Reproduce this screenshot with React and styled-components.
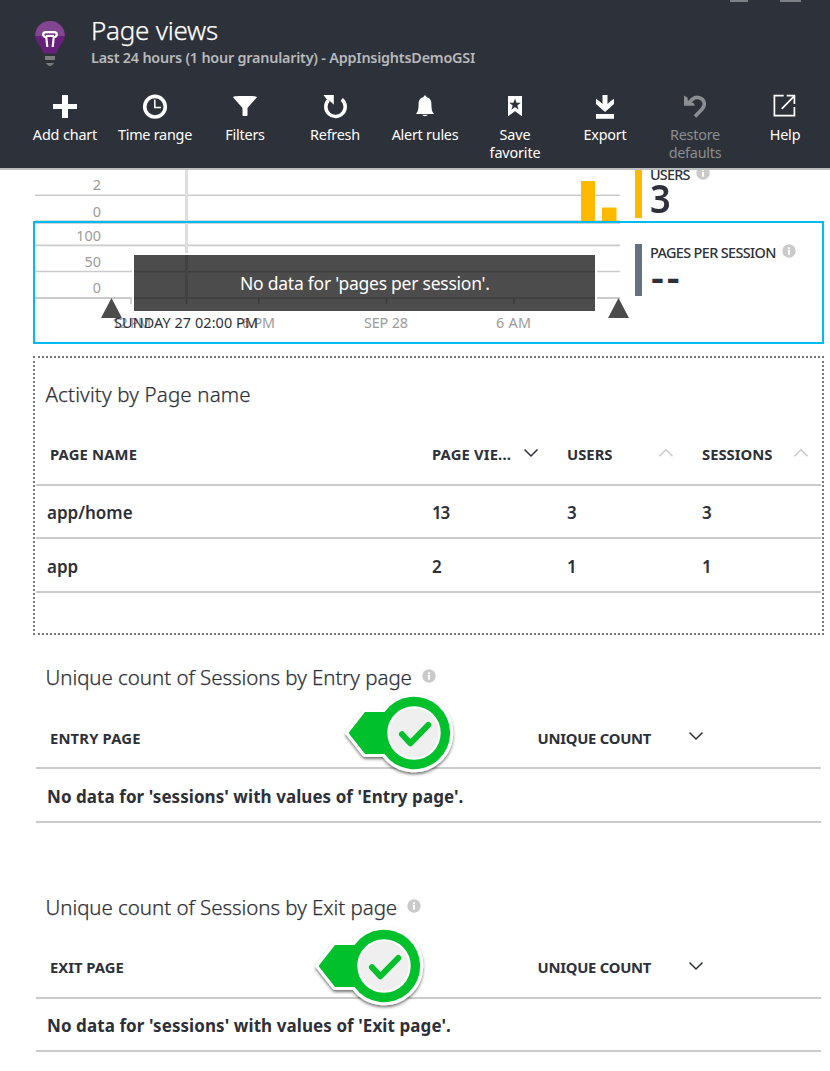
import React from "react";
import styled, { createGlobalStyle } from "styled-components";

const Global = createGlobalStyle`
  * { box-sizing: border-box; }
  body {
    margin: 0;
    background: #fff;
    color: #2d3038;
    font-family: "Noto Sans", "Open Sans", sans-serif;
    overflow: hidden;
  }
  svg { display: block; flex: none; }
`;

const Blade = styled.main`
  width: 830px;
  height: 1071px;
  display: flex;
  flex-direction: column;
  overflow: hidden;
`;

const Header = styled.header`
  position: relative;
  height: 170px;
  flex: none;
  background: #2d3139;
  border-bottom: 2px solid #bbbdbe;
`;

const WindowControls = styled.div`
  position: absolute;
  top: 0;
  left: 730px;
  display: flex;
  gap: 32px;
`;

const ControlEdge = styled.span`
  width: ${(p) => p.$width}px;
  height: 2px;
  background: #7c7f84;
`;

const TitleBar = styled.div`
  display: flex;
  height: 90px;
  padding: 20px 0 0 34px;
`;

const Titles = styled.div`
  display: flex;
  flex-direction: column;
  padding-left: 25px;
`;

const Label = styled.span`
  white-space: nowrap;
  letter-spacing: ${(p) => p.$track || 0}px;
`;

const Title = styled.h1`
  margin: -7px 0 0;
  height: 34px;
  font-size: 26px;
  line-height: 34px;
  font-weight: 300;
  -webkit-text-stroke: 0.25px currentColor;
  color: #fff;
`;

const Subtitle = styled.div`
  height: 20px;
  line-height: 20px;
  margin-top: 1px;
  font-size: 14.4px;
  font-weight: 600;
  color: #b7b9bc;
`;

const Toolbar = styled.nav`
  display: flex;
  padding-left: 20px;
`;

const Tool = styled.button`
  width: 90px;
  padding: 3px 0 0;
  border: 0;
  background: none;
  font: 400 14.4px/18px "Noto Sans", "Open Sans", sans-serif;
  color: ${(p) => (p.$disabled ? "#8b8e92" : "#fff")};
  display: flex;
  flex-direction: column;
  align-items: center;
`;

const ToolIcon = styled.span`
  width: 26px;
  height: 26px;
  margin-bottom: 7px;
`;

const MetricRow = styled.section`
  display: flex;
  height: ${(p) => p.$height}px;
  flex: none;
  margin: 0 6px 0 33px;
  overflow: hidden;
  border: ${(p) => (p.$selected ? "2px solid #00bcf2" : "0 solid transparent")};
  border-width: ${(p) => (p.$selected ? "2px" : "0 2px")};
`;

const Metric = styled.div`
  display: flex;
  height: 52px;
  margin: ${(p) => p.$top}px 0 0 15px;
`;

const MetricStripe = styled.span`
  width: 7px;
  background: ${(p) => p.$color};
`;

const MetricText = styled.div`
  padding-left: 8px;
`;

const MetricName = styled.div`
  display: flex;
  gap: ${(p) => p.$gap}px;
  height: 18px;
  font-size: 14.4px;
  line-height: 18px;
  white-space: nowrap;
  font-weight: 500;
`;

const MetricValue = styled.div`
  font-size: 39px;
  line-height: 40px;
  height: 34px;
  margin-top: -6px;
  font-weight: 600;
  transform: scaleX(0.93);
  transform-origin: left;
`;

const Dashes = styled.div`
  font-size: 40px;
  line-height: 40px;
  font-weight: 600;
  margin-top: -5px;
  padding-left: 1px;
  letter-spacing: 3px;
`;

const Grid = styled.section`
  flex: none;
  height: ${(p) => p.$height}px;
  margin: ${(p) => p.$top}px 6px 0 33px;
  padding: 0 1px;
  border: 2px dotted ${(p) => (p.$outlined ? "#777" : "transparent")};
`;

const GridTitle = styled.h2`
  display: flex;
  gap: ${(p) => p.$gap || 0}px;
  margin: 0;
  padding: 21px 0 0 9.5px;
  height: 74px;
  font-size: 20.5px;
  line-height: 30px;
  font-weight: 300;
  -webkit-text-stroke: 0.25px currentColor;
`;

const Line = styled.div`
  display: flex;
  height: ${(p) => p.$height}px;
  border-bottom: 2px solid #cbcbcb;
`;

const HeadLine = styled(Line)`
  font-size: 14.8px;
  font-weight: 700;
  line-height: 20px;
  padding-top: ${(p) => p.$pad}px;

  svg { margin-top: ${(p) => p.$iconDrop}px; }
`;

const BodyLine = styled(Line)`
  font-size: 17px;
  font-weight: ${(p) => p.$weight || 600};
  line-height: 24px;
  padding-top: ${(p) => p.$pad}px;
`;

const Cell = styled.div`
  display: flex;
  justify-content: space-between;
  flex: none;
  width: ${(p) => p.$width}px;
  padding-left: ${(p) => p.$left || 0}px;
  padding-right: ${(p) => p.$right || 0}px;
`;

const NumberCell = styled(Cell)`
  font-size: 17px;
  letter-spacing: -1.2px;
`;

const MarkerAnchor = styled.div`
  position: absolute;
  left: ${(p) => p.$left}px;
  top: ${(p) => p.$top}px;
`;

const Icon = ({ children, ...rest }) => (
  <svg width="26" height="26" viewBox="0 0 26 26" fill="currentColor" {...rest}>{children}</svg>
);

const icons = {
  add: <path d="M10 2h6v9h9v5h-9v9h-6v-9H1v-5h9z" />,
  clock: (
    <g fill="none" stroke="currentColor">
      <circle cx="13" cy="13.7" r="10.3" strokeWidth="3.6" />
      <path d="M12.8 6.5v8h6.2" strokeWidth="1.5" />
    </g>
  ),
  filter: <path d="M1 4.2C1.6 3 6 3 13 3s11.400 0 12 1.200L15.500 15v7.500c0 .8-5 .8-5 0V15z" />,
  refresh: (
    <g>
      <path d="M6.400 7.200A9.700 9.700 0 1 0 19.800 6.400" fill="none" stroke="currentColor" strokeWidth="3.500" />
      <path d="M1.500 2h10.300v9.800L8.800 8.800 4.500 6z" />
    </g>
  ),
  bell: <path d="M13 2.500c.9 0 1.300.7 1.400 1.500 3.700.9 5 3.600 5 7 0 5.500.8 8 2.300 9.200v.8H4.300v-.8C5.800 19 6.600 16.500 6.600 11c0-3.400 1.300-6.100 5-7 .1-.8.5-1.500 1.400-1.500zM10.300 21.800h5.400c-.3 1.800-5.100 1.800-5.400 0z" />,
  bookmark: (
    <path fillRule="evenodd" d="M6 3h14v20.300l-7-5-7 5zM13 5.500l-1.500 4.200H7.200l3.500 2.700-1.300 4.300 3.600-2.600 3.600 2.600-1.300-4.300 3.500-2.700h-4.300z" />
  ),
  download: <path d="M10.500 2h5v9l3-2.700L22 5.800V11l-9 8-9-8V5.800l3.500 2.500 3 2.700zM4 21h18v4.700H4z" />,
  undo: (
    <g>
      <path d="M6 10.500l4.500-4.300c4-3.400 10.500-1.800 11.700 3.500.5 2.500-.2 4.300-2 6.200L13 23.500" fill="none" stroke="currentColor" strokeWidth="3.600" />
      <path d="M2 2.500l3.500 2L6 8l5.800 2.200L13 12.700H2z" />
    </g>
  ),
  external: (
    <path d="M12 2.700H2.700v20h20V14M22.700 11v-3M10 15.800L22.500 3.200M15 2.700h7.700V10" transform="translate(-.3 0)" fill="none" stroke="currentColor" strokeWidth="1.700" />
  ),
};

const tools = [
  { icon: "add", lines: ["Add chart"], track: -0.15 },
  { icon: "clock", lines: ["Time range"], track: -0.25 },
  { icon: "filter", lines: ["Filters"], track: -0.2 },
  { icon: "refresh", lines: ["Refresh"], track: -0.25 },
  { icon: "bell", lines: ["Alert rules"], track: -0.25 },
  { icon: "bookmark", lines: ["Save", "favorite"], track: -0.15 },
  { icon: "download", lines: ["Export"], track: -0.25 },
  { icon: "undo", lines: ["Restore", "defaults"], track: -0.25, disabled: true },
  { icon: "external", lines: ["Help"], track: -0.15 },
];

const Bulb = () => (
  <svg width="32" height="48" viewBox="0 0 32 48">
    <path d="M16 1C7.500 1 1.200 7.300 1.200 15.500c0 6.500 5.300 9.500 7 14.500.6 1.800 1 3.500 2.800 3.500h10c1.800 0 2.200-1.700 2.800-3.500 1.700-5 7-8 7-14.500C30.800 7.300 24.500 1 16 1z" fill="#68217a" />
    <path d="M16 1C7.500 1 1.200 7.300 1.200 15.500v.5h29.600v-.5C30.800 7.300 24.500 1 16 1z" fill="#82458f" />
    <path d="M13.300 27L12.300 17.500Q8.800 16.500 9.200 14.200 9.600 12.200 11.500 12.200h9Q22.400 12.200 22.800 14.200 23.200 16.500 19.700 17.500L18.700 27M12 16h8" fill="none" stroke="#fff" strokeWidth="2.200" strokeLinejoin="round" />
    <path d="M11 36h10v4H11zM12 43h8c-.7 1.500-2.500 3-4 3s-3.300-1.500-4-3z" fill="#7d7d7d" />
  </svg>
);

const Info = ({ drop = 0 }) => (
  <svg width="14" height={14 + drop} viewBox={`0 ${-drop} 14 ${14 + drop}`}>
    <circle cx="7" cy="7" r="6.700" fill="#cacaca" />
    <path d="M6 3.200h2v1.700H6zM5.700 5.800H8v5H6V7h-.3z" fill="#fff" />
  </svg>
);

const Chevron = ({ up }) => (
  <svg width="16" height="10" viewBox="0 0 16 10" fill="none" stroke={up ? "#cacaca" : "#2d3038"} strokeWidth="1.500">
    <path d={up ? "M1.500 8.300L8 1.800l6.500 6.500" : "M1.500 1.500L8 8l6.500-6.500"} />
  </svg>
);

const Marker = ({ left, top }) => (
  <MarkerAnchor $left={left} $top={top}>
    <svg width="116" height="90" viewBox="-72 -43 116 90">
      <defs>
        <filter id="drop" x="-20%" y="-20%" width="140%" height="150%">
          <feDropShadow dx="0" dy="2" stdDeviation="1.500" floodColor="#000" floodOpacity=".55" />
        </filter>
      </defs>
      <g filter="url(#drop)">
        <path d="M-65.500 0l16.500-21h19.500A36.200 36.200 0 1 1-29.500 21H-49z" fill="#fff" stroke="#fff" strokeWidth="6" strokeLinejoin="round" />
      </g>
      <path d="M-65.500 0l16.500-21h19.500A36.200 36.200 0 1 1-29.500 21H-49z" fill="#00c02c" />
      <circle r="25.700" fill="#efefef" stroke="#fff" strokeWidth="2" />
      <path d="M-12 1.300L-3.700 10.300 14.200-8" fill="none" stroke="#00c02c" strokeWidth="6" strokeLinecap="round" strokeLinejoin="round" />
    </svg>
  </MarkerAnchor>
);

const AxisLabel = styled.text`
  font-size: 14.400px;
  fill: ${(p) => (p.$dark ? "#2d3038" : "#9b9b9b")};
  text-anchor: ${(p) => (p.$end ? "end" : "start")};
`;

/* Plot coordinates share the horizontal origin of the row's inner edge. */
const UsersPlot = () => (
  <svg width="585" height="51" viewBox="35 170 585 51">
    <path d="M35 195.200h585" stroke="#cbcbcb" strokeWidth="1.600" />
    <path d="M186.500 170v51" stroke="#dedede" strokeWidth="3" />
    <path d="M35 220.500h585" stroke="#dcdcdc" />
    <path d="M581 181h14v40h-14zM602 207.500h14.500V221H602z" fill="#ffb900" />
    <AxisLabel x="101" y="190" $end>2</AxisLabel>
    <AxisLabel x="101" y="217" $end>0</AxisLabel>
  </svg>
);

const SessionPlot = () => (
  <svg width="585" height="119" viewBox="35 223 585 119" overflow="visible">
    <path d="M35 223.500h585" stroke="#d2d2d2" />
    <path d="M35 245.400h585M35 271.500h585" stroke="#cbcbcb" strokeWidth="1.600" />
    <path d="M35 298h585" stroke="#cbcbcb" strokeWidth="2" />
    <path d="M186.500 223v30" stroke="#dedede" strokeWidth="3" />
    <path d="M132 253h465v60H132z" fill="#fff" />
    <path d="M131 298v6" stroke="#cbcbcb" strokeWidth="1.500" />
    <path d="M134 255h461v56H134z" fill="#4c4c4c" />
    <path d="M134 271.700h461M134 298h461" stroke="#3e3e3e" strokeWidth="1.500" />
    <path d="M186.500 255v43" stroke="#424242" strokeWidth="3" />
    <path d="M186.500 298v6M258.700 298v6M386.500 298v6M514 298v6" stroke="#3a3a3a" strokeWidth="1.500" />
    <text x="240" y="290" fontSize="17.500" fill="#fff" textLength="250" lengthAdjust="spacing">No data for 'pages per session'.</text>
    <AxisLabel x="101" y="241" $end>100</AxisLabel>
    <AxisLabel x="101" y="266.500" $end>50</AxisLabel>
    <AxisLabel x="101" y="292.500" $end>0</AxisLabel>
    <AxisLabel x="112" y="328" textLength="39">12 PM</AxisLabel>
    <AxisLabel x="242" y="328" textLength="33">6 PM</AxisLabel>
    <AxisLabel x="364" y="328" textLength="44">SEP 28</AxisLabel>
    <AxisLabel x="496" y="328" textLength="35">6 AM</AxisLabel>
    <AxisLabel x="114" y="328" textLength="144" $dark>SUNDAY 27 02:00 PM</AxisLabel>
    <path d="M111.500 298l10.500 20h-21zM618.500 298l10.500 20h-21z" fill="#4c4c4c" />
  </svg>
);

const EmptyGrid = ({ height, top, title, track, gap, headPad, iconDrop, column, columnTrack, bodyHeight, bodyPad, message, messageTrack }) => (
  <Grid $height={height} $top={top}>
    <GridTitle $gap={gap}>
      <Label $track={track}>{title}</Label>
      <Info drop={7} />
    </GridTitle>
    <HeadLine $height={54} $pad={headPad} $iconDrop={iconDrop}>
      <Cell $width={501.5} $left={14}><Label $track={columnTrack}>{column}</Label></Cell>
      <Cell $width={166.5}><Label $track={-0.25}>UNIQUE COUNT</Label><Chevron /></Cell>
    </HeadLine>
    <BodyLine $height={bodyHeight} $pad={bodyPad} $weight={700}>
      <Cell $width={600} $left={11}><Label $track={messageTrack}>{message}</Label></Cell>
    </BodyLine>
  </Grid>
);

export default function App() {
  return (
    <>
      <Global />
      <Blade>
        <Header>
          <WindowControls><ControlEdge $width={18} /><ControlEdge $width={21} /></WindowControls>
          <TitleBar>
            <Bulb />
            <Titles>
              <Title><Label $track={-0.25}>Page views</Label></Title>
              <Subtitle><Label $track={-0.22}>Last 24 hours (1 hour granularity) - AppInsightsDemoGSI</Label></Subtitle>
            </Titles>
          </TitleBar>
          <Toolbar>
            {tools.map((t) => (
              <Tool key={t.icon} $disabled={t.disabled}>
                <ToolIcon><Icon>{icons[t.icon]}</Icon></ToolIcon>
                {t.lines.map((l) => <Label key={l} $track={t.track}>{l}</Label>)}
              </Tool>
            ))}
          </Toolbar>
        </Header>

        <MetricRow $height={51}>
          <UsersPlot />
          <Metric $top={-4}>
            <MetricStripe $color="#ffb900" />
            <MetricText>
              <MetricName $gap={6}><Label $track={-0.8}>USERS</Label><Info /></MetricName>
              <MetricValue>3</MetricValue>
            </MetricText>
          </Metric>
        </MetricRow>
        <MetricRow $height={123} $selected>
          <SessionPlot />
          <Metric $top={21}>
            <MetricStripe $color="#637180" />
            <MetricText>
              <MetricName $gap={6}><Label $track={-0.62}>PAGES PER SESSION</Label><Info /></MetricName>
              <Dashes>--</Dashes>
            </MetricText>
          </Metric>
        </MetricRow>

        <Grid $height={279} $top={12} $outlined>
          <GridTitle><Label $track={0.16}>Activity by Page name</Label></GridTitle>
          <HeadLine $height={54} $pad={12} $iconDrop={4}>
            <Cell $width={396} $left={14}><Label $track={0.15}>PAGE NAME</Label></Cell>
            <Cell $width={135} $right={28}><Label $track={0.15}>PAGE VIE...</Label><Chevron /></Cell>
            <Cell $width={135} $right={28}><Label>USERS</Label><Chevron up /></Cell>
            <Cell $width={119} $right={12}><Label>SESSIONS</Label><Chevron up /></Cell>
          </HeadLine>
          {[["app/home", 13, 3, 3], ["app", 2, 1, 1]].map((r, i) => (
            <BodyLine key={r[0]} $height={i ? 54 : 53} $pad={i ? 16 : 15}>
              <Cell $width={396} $left={11}><Label>{r[0]}</Label></Cell>
              <NumberCell $width={135}>{r[1]}</NumberCell>
              <NumberCell $width={135}>{r[2]}</NumberCell>
              <NumberCell $width={119}>{r[3]}</NumberCell>
            </BodyLine>
          ))}
        </Grid>

        <EmptyGrid height={200} top={4} gap={10} title="Unique count of Sessions by Entry page" track={-0.05}
          headPad={13} iconDrop={3} column="ENTRY PAGE" columnTrack={0.15}
          bodyHeight={54} bodyPad={16}
          message="No data for 'sessions' with values of 'Entry page'." messageTrack={0.06} />
        <EmptyGrid height={202} top={30} gap={10} title="Unique count of Sessions by Exit page" track={-0.05}
          headPad={12} iconDrop={4} column="EXIT PAGE" columnTrack={0}
          bodyHeight={53} bodyPad={15}
          message="No data for 'sessions' with values of 'Exit page'." messageTrack={0.08} />
        <Marker left={342} top={690} />
        <Marker left={312} top={923} />
      </Blade>
    </>
  );
}
